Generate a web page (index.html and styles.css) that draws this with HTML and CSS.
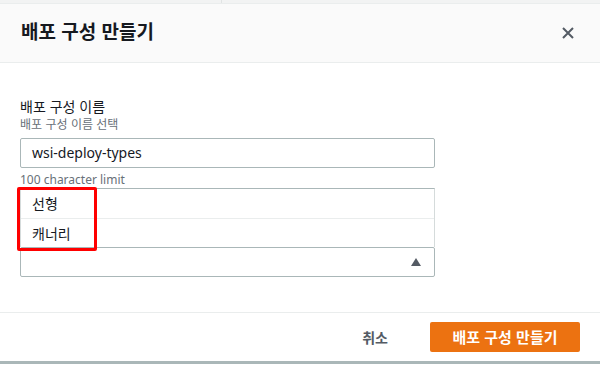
FILE: index.html
```html
<!DOCTYPE html>
<html lang="ko">
<head>
<meta charset="utf-8">
<link rel="stylesheet" href="styles.css">
</head>
<body>
<div class="topbar"><span class="topdiv"></span></div>
<div class="header">
  <h2 class="title">배포 구성 만들기</h2>
  <svg class="close" width="12" height="12" viewBox="0 0 12 12"><path d="M1 1L11 11M11 1L1 11" stroke="#545b64" stroke-width="2" fill="none"/></svg>
</div>
<div class="content">
  <div class="label">배포 구성 이름</div>
  <div class="desc">배포 구성 이름 선택</div>
  <div class="input">wsi-deploy-types</div>
  <div class="hint">100 character limit</div>
  <div class="dropwrap">
    <div class="dropdown">
      <div class="item">선형</div>
      <div class="item sep">캐너리</div>
    </div>
    <div class="highlight"></div>
  </div>
  <div class="select">
    <svg class="caret" width="10" height="8" viewBox="0 0 10 8"><path d="M5 0L10 8H0Z" fill="#545b64"/></svg>
  </div>
</div>
<div class="footer">
  <span class="cancel">취소</span>
  <span class="primary">배포 구성 만들기</span>
</div>
<div class="bottomline"></div>
</body>
</html>
```
FILE: styles.css
```css
* { box-sizing: border-box; }
html, body { margin: 0; padding: 0; }
body {
  width: 600px;
  height: 365px;
  overflow: hidden;
  background: #fff;
  font-family: "Noto Sans", "Noto Sans CJK KR", sans-serif;
  color: #16191f;
}
.topbar {
  height: 4px;
  background: #f2f3f3;
  border-bottom: 1px solid #eaeded;
  position: relative;
}
.topdiv {
  position: absolute;
  left: 221px;
  top: 0;
  width: 1px;
  height: 3px;
  background: #e1e4e4;
}
.header {
  height: 59px;
  background: #fafafa;
  border-bottom: 1px solid #eaeded;
  display: flex;
  align-items: center;
  justify-content: space-between;
  padding: 0 26px 0 21px;
}
.title {
  margin: 0;
  font-size: 19px;
  font-weight: 700;
  line-height: 24px;
  color: #16191f;
  font-family: "Noto Sans CJK KR", sans-serif;
  position: relative;
  top: -2px;
}
.close { display: block; }
.content {
  padding: 34px 165px 35px 20px;
}
.label {
  font-size: 14px;
  line-height: 19px;
  font-family: "Noto Sans CJK KR", sans-serif;
}
.desc {
  font-size: 12px;
  line-height: 16px;
  color: #687078;
  font-family: "Noto Sans CJK KR", sans-serif;
}
.input {
  margin-top: 6px;
  height: 30px;
  border: 1px solid #aab7b8;
  border-radius: 2px;
  padding: 0 11px;
  font-size: 14px;
  line-height: 28px;
  color: #16191f;
}
.hint {
  margin-top: 4px;
  font-size: 12px;
  line-height: 16px;
  color: #687078;
}
.dropwrap { position: relative; }
.dropdown {
  border: 1px solid #d5dbdb;
  border-top-color: #aab7b8;
  border-bottom: none;
}
.item {
  height: 29px;
  padding: 0 11px;
  font-size: 14px;
  line-height: 29px;
  font-family: "Noto Sans CJK KR", sans-serif;
}
.item.sep { border-top: 1px solid #eaeded; }
.highlight {
  position: absolute;
  left: -3px;
  top: -1px;
  width: 80px;
  height: 64px;
  border: 3px solid #f00;
  border-radius: 2px;
}
.select {
  height: 30px;
  border: 1px solid #aab7b8;
  border-radius: 2px;
  display: flex;
  align-items: center;
  justify-content: flex-end;
  padding-right: 13px;
}
.caret { display: block; }
.footer {
  border-top: 1px solid #eaeded;
  height: 49px;
  display: flex;
  align-items: center;
  justify-content: flex-end;
  padding-right: 20px;
  gap: 42px;
}
.cancel {
  font-size: 14px;
  font-weight: 700;
  color: #545b64;
  font-family: "Noto Sans CJK KR", sans-serif;
}
.primary {
  width: 150px;
  height: 30px;
  background: #ec7211;
  border-radius: 2px;
  color: #fff;
  font-size: 15px;
  font-weight: 700;
  line-height: 30px;
  text-align: center;
  font-family: "Noto Sans CJK KR", sans-serif;
}
.bottomline {
  height: 3px;
  background: #aab7b8;
}
```
